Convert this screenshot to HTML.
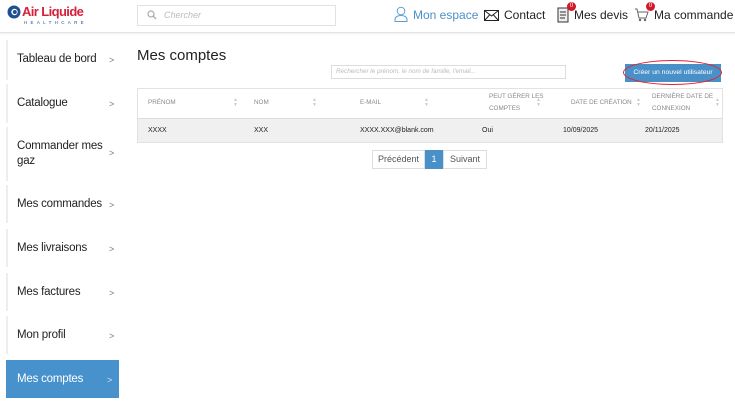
<!DOCTYPE html>
<html><head><meta charset="utf-8"><style>
*{box-sizing:border-box;margin:0;padding:0}
body{width:735px;height:404px;overflow:hidden;background:#fff;font-family:"Liberation Sans",Arial,sans-serif;color:#222;position:relative}
.hdr{position:absolute;left:0;top:0;width:735px;height:33px;background:#fff;border-bottom:1px solid #e3e3e3;box-shadow:0 1px 2px #eee}
.abs{position:absolute;white-space:nowrap}
.side{position:absolute;left:6px;width:113px;background:#fff;border-left:2px solid #eee;font-size:11.5px;letter-spacing:-0.2px}
.side span{position:absolute;left:9px}
.side i{position:absolute;left:101px;font-style:normal;font-size:9px;color:#777}
.th{position:absolute;font-size:6.3px;color:#888;line-height:12px}
.ar{position:absolute;font-size:5px;color:#ccc;line-height:5px;top:98px}
.td{position:absolute;font-size:7px;top:127px;color:#222}
</style></head><body>
<div class="hdr"></div>
<svg class="abs" style="left:7px;top:5px" width="14" height="14" viewBox="0 0 14 14"><circle cx="7" cy="7" r="6.5" fill="#1d4f91"/><circle cx="7.5" cy="7" r="3.2" fill="#fff"/><circle cx="7.8" cy="7" r="2" fill="#1d4f91"/></svg>
<div class="abs" style="left:22px;top:4px;font-size:13px;font-weight:bold;color:#d5213a;letter-spacing:-0.6px">Air Liquide</div>
<div class="abs" style="left:24px;top:20px;font-size:4.5px;color:#1d4f91;letter-spacing:3.3px">HEALTHCARE</div>
<div class="abs" style="left:137px;top:5px;width:199px;height:21px;border:1px solid #e2e2e2"></div>
<svg class="abs" style="left:147px;top:10px" width="10" height="10"><circle cx="4" cy="4" r="3" stroke="#aaa" fill="none" stroke-width="1.2"/><line x1="6.2" y1="6.2" x2="9" y2="9" stroke="#aaa" stroke-width="1.3"/></svg>
<div class="abs" style="left:164px;top:10px;font-size:9px;color:#bbb;font-style:italic">Chercher</div>
<svg class="abs" style="left:394px;top:6px" width="14" height="16"><circle cx="7" cy="5" r="3.8" fill="none" stroke="#5b9fd4"/><path d="M1 15.5v-2c0-2.5 2.5-4 6-4s6 1.5 6 4v2z" fill="none" stroke="#5b9fd4"/></svg>
<div class="abs" style="left:413px;top:8px;font-size:12px;color:#4a90c8">Mon espace</div>
<svg class="abs" style="left:484px;top:10px" width="15" height="11"><rect x="0.5" y="0.5" width="14" height="10" fill="none" stroke="#222"/><path d="M0.5 0.5L7.5 6L14.5 0.5M0.5 10.5L5.5 5M14.5 10.5L9.5 5" fill="none" stroke="#222"/></svg>
<div class="abs" style="left:504px;top:8px;font-size:12px">Contact</div>
<svg class="abs" style="left:556px;top:7px" width="13" height="16"><rect x="2" y="1" width="10" height="14" fill="#eee" stroke="#333"/><path d="M4 5h6M4 8h6M4 11h5" stroke="#333"/></svg>
<div class="abs" style="left:567px;top:2px;width:9px;height:9px;border-radius:50%;background:#d01a2a;color:#fff;font-size:6px;text-align:center;line-height:9px">0</div>
<div class="abs" style="left:574px;top:8px;font-size:12px">Mes devis</div>
<svg class="abs" style="left:634px;top:8px" width="15" height="14"><path d="M1 1h2l2 9h7l2-6H4" fill="none" stroke="#666"/><circle cx="6" cy="12" r="1.2" fill="#666"/><circle cx="11" cy="12" r="1.2" fill="#666"/></svg>
<div class="abs" style="left:646px;top:2px;width:9px;height:9px;border-radius:50%;background:#d01a2a;color:#fff;font-size:6px;text-align:center;line-height:9px">0</div>
<div class="abs" style="left:654px;top:8px;font-size:12px">Ma commande</div>

<div class="side" style="top:40px;height:40px"><span style="top:13px">Tableau de bord</span><i style="top:15px">&gt;</i></div>
<div class="side" style="top:84px;height:39px"><span style="top:13px">Catalogue</span><i style="top:15px">&gt;</i></div>
<div class="side" style="top:127px;height:54px"><span style="top:12px;line-height:15px;white-space:normal;width:90px">Commander mes gaz</span><i style="top:21px">&gt;</i></div>
<div class="side" style="top:185px;height:38px"><span style="top:13px">Mes commandes</span><i style="top:15px">&gt;</i></div>
<div class="side" style="top:229px;height:38px"><span style="top:13px">Mes livraisons</span><i style="top:15px">&gt;</i></div>
<div class="side" style="top:273px;height:38px"><span style="top:13px">Mes factures</span><i style="top:15px">&gt;</i></div>
<div class="side" style="top:316px;height:38px"><span style="top:13px">Mon profil</span><i style="top:15px">&gt;</i></div>
<div class="side" style="top:360px;height:38px;background:#4792cc;border-left:none;color:#fff"><span style="top:13px;left:11px">Mes comptes</span><i style="top:15px;color:#dde">&gt;</i></div>

<div class="abs" style="left:137px;top:47px;font-size:15px">Mes comptes</div>
<div class="abs" style="left:331px;top:65px;width:235px;height:14px;border:1px solid #ddd;font-size:6.3px;color:#bbb;font-style:italic;padding:2px 4px">Rechercher le prénom, le nom de famille, l'email...</div>
<div class="abs" style="left:625px;top:64px;width:96px;height:18px;background:#4a90c8;color:#fff;font-size:6.8px;text-align:center;line-height:18px">Créer un nouvel utilisateur</div>
<div class="abs" style="left:623px;top:60px;width:99px;height:25px;border:1.3px solid #e0222a;border-radius:50%"></div>

<div class="abs" style="left:137px;top:88px;width:586px;height:55px;border:1px solid #e2e2e2"></div>
<div class="abs" style="left:138px;top:118px;width:584px;height:24px;background:#f0f0f0;border-top:1px solid #ddd"></div>

<div class="th" style="left:148px;top:97px">PRÉNOM</div>
<div class="th" style="left:254px;top:97px">NOM</div>
<div class="th" style="left:360px;top:97px">E-MAIL</div>
<div class="th" style="left:489px;top:91px">PEUT GÉRER LES<br>COMPTES</div>
<div class="th" style="left:571px;top:97px">DATE DE CRÉATION</div>
<div class="th" style="left:652px;top:91px">DERNIÈRE DATE DE<br>CONNEXION</div>
<div class="ar" style="left:233px">▲<br>▼</div>
<div class="ar" style="left:312px">▲<br>▼</div>
<div class="ar" style="left:424px">▲<br>▼</div>
<div class="ar" style="left:494px;display:none"></div>
<div class="ar" style="left:494px;display:none"></div>
<div class="ar" style="left:494px;display:none"></div>
<div class="ar" style="left:494px;display:none"></div>
<div class="ar" style="left:536px">▲<br>▼</div>
<div class="ar" style="left:636px">▲<br>▼</div>
<div class="ar" style="left:715px">▲<br>▼</div>

<div class="td" style="left:148px">XXXX</div>
<div class="td" style="left:254px">XXX</div>
<div class="td" style="left:360px">XXXX.XXX@blank.com</div>
<div class="td" style="left:482px">Oui</div>
<div class="td" style="left:563px">10/09/2025</div>
<div class="td" style="left:645px">20/11/2025</div>

<div class="abs" style="left:372px;top:150px;width:53px;height:19px;border:1px solid #ddd;font-size:9px;color:#555;text-align:center;line-height:17px">Précédent</div>
<div class="abs" style="left:425px;top:150px;width:18px;height:19px;background:#4a90c8;color:#fff;font-size:9px;text-align:center;line-height:19px">1</div>
<div class="abs" style="left:443px;top:150px;width:44px;height:19px;border:1px solid #ddd;font-size:9px;color:#555;text-align:center;line-height:17px">Suivant</div>
</body></html>
